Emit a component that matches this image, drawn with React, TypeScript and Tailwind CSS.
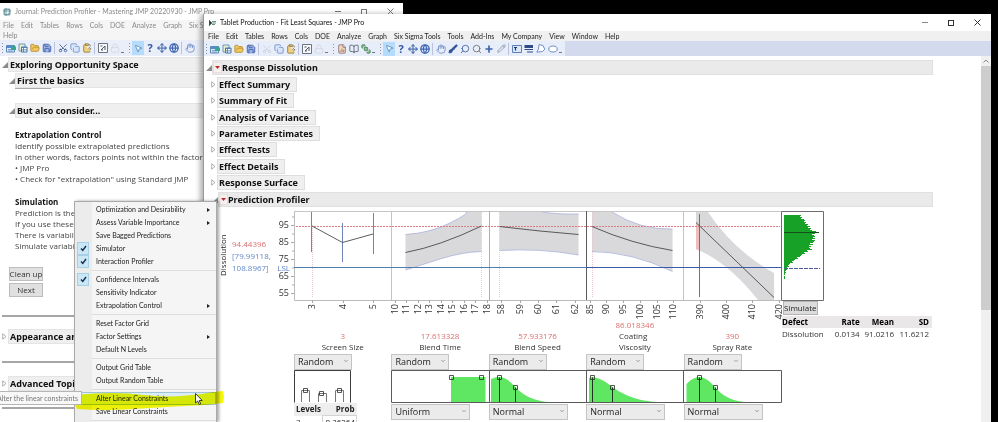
import React from 'react';
import {
  BookOpen, BringToFront, Brush, ClipboardPaste, Copy, FileChartColumn, FolderOpen, Globe, Hand, Lock,
  MousePointer2, Move, Pencil, Plus, Save, Scissors, Search, Table2, ChevronDown,
} from 'lucide-react';

const MENUS = ['File', 'Edit', 'Tables', 'Rows', 'Cols', 'DOE', 'Analyze', 'Graph', 'Six Sigma Tools', 'Tools', 'Add-Ins', 'My Company', 'View', 'Window', 'Help'];

const SECTIONS = ['Effect Summary', 'Summary of Fit', 'Analysis of Variance', 'Parameter Estimates', 'Effect Tests', 'Effect Details', 'Response Surface'];

const FACTORS = [
  { name: ['Screen Size'], value: '3', dist: null },
  { name: ['Blend Time'], value: '17.613328', dist: 'Uniform' },
  { name: ['Blend Speed'], value: '57.933176', dist: 'Normal' },
  { name: ['Coating', 'Viscosity'], value: '86.018346', dist: 'Normal' },
  { name: ['Spray Rate'], value: '390', dist: 'Normal' },
];

type Entry = { label: string; checked?: boolean; sub?: boolean; active?: boolean };

const CONTEXT_MENU: Entry[][] = [
  [
    { label: 'Optimization and Desirability', sub: true },
    { label: 'Assess Variable Importance', sub: true },
    { label: 'Save Bagged Predictions' },
    { label: 'Simulator', checked: true },
    { label: 'Interaction Profiler', checked: true },
  ],
  [
    { label: 'Confidence Intervals', checked: true },
    { label: 'Sensitivity Indicator' },
    { label: 'Extrapolation Control', sub: true },
  ],
  [{ label: 'Reset Factor Grid' }, { label: 'Factor Settings', sub: true }, { label: 'Default N Levels' }],
  [{ label: 'Output Grid Table' }, { label: 'Output Random Table' }],
  [{ label: 'Alter Linear Constraints', active: true }, { label: 'Save Linear Constraints' }],
];

const X_TICKS: [number, string][] = [
  [312, '3'], [343, '4'], [373, '5'],
  [395, '10'], [406, '11'], [418, '12'], [429, '13'], [441, '14'], [452, '15'], [464, '16'], [475, '17'], [487, '18'],
  [501, '58'], [520, '59'], [538, '60'], [556, '61'], [575, '62'],
  [590, '85'], [606, '90'], [623, '95'], [640, '100'], [657, '105'], [673, '110'],
  [700, '390'], [726, '400'], [752, '410'], [779, '420'],
];

const Y_TICKS: [number, string][] = [[225, '95'], [242, '85'], [259, '75'], [276, '65'], [293, '55']];

// bar length of each 1px slice, top to bottom
const HISTOGRAM = [
  17, 16, 18, 17, 20, 21, 20, 22, 21, 24, 23, 26, 24, 27, 26, 28, 32, 29, 31, 28, 30, 31, 29, 31, 28, 31, 30, 29, 26, 29,
  25, 27, 25, 26, 28, 23, 24, 20, 21, 18, 17, 16, 13, 14, 11, 10, 8, 9, 6, 5, 4, 5, 3, 2, 3, 2, 1, 2, 1, 1, 0, 1, 1, 1,
];

const Grip = () => (
  <span className="mx-px flex w-[3px] flex-col items-center gap-[2px]">
    {[0, 1, 2, 3].map((i) => <span key={i} className="h-px w-px bg-[#8795b5]" />)}
  </span>
);

const Split = () => <span className="mx-px h-3 w-[2px] border-l border-[#b9c3dc]" />;

const Tail = () => <span className="mr-[3px] mb-[3px] h-[3px] w-[3px] self-end border-b border-[#6d7892]" />;

const Tool: React.FC<{ label: string; active?: boolean; children: React.ReactNode }> = ({ label, active, children }) => (
  <button
    type="button"
    aria-label={label}
    className={active ? 'flex h-[14px] w-3 items-center justify-center bg-[#b5dcfa]' : 'flex h-[14px] w-3 items-center justify-center'}
  >
    {children}
  </button>
);

const FileTools = () => (
  <>
    <Grip />
    <Tool label="Home window">
      <svg className="h-[10px] w-[10px]" viewBox="0 0 10 10">
        <path d="M.5 2.500h8v6.500h-8z" fill="#dfeaf7" stroke="#5d87b8" />
        <path d="M1 3h7v2H1z" fill="#4f8fcf" />
        <path d="M5 5l3-3 2 2v3H5z" fill="#3aa58a" />
        <path d="M2 6.500h3M2 8h5" stroke="#5d87b8" strokeWidth=".7" />
      </svg>
    </Tool>
    <Tool label="New data table">
      <svg className="h-[10px] w-[10px]" viewBox="0 0 10 10">
        <path d="M1 1h6v7H1z" fill="#e8f1cf" stroke="#6f98b8" />
        <path d="M3.500 4h5.500v5H3.500z" fill="#fff" stroke="#4577a8" />
        <path d="M3.500 4.500h5.500M5.500 4v5M3.500 6.800h5.500" stroke="#4577a8" strokeWidth=".8" />
      </svg>
    </Tool>
    <Tool label="Open">
      <FolderOpen className="h-[10px] w-[10px] fill-[#efc95c] text-[#b88a2b]" />
    </Tool>
    <Tool label="Save">
      <Save className="h-[10px] w-[10px] fill-[#9db4e6] text-[#3b57a4]" />
    </Tool>
    <Split />
  </>
);

const EditTools: React.FC<{ cut: boolean }> = ({ cut }) => (
  <>
    <Tool label="Cut"><Scissors className={cut ? 'h-[10px] w-[10px] -rotate-90 text-[#3f5d96]' : 'h-[10px] w-[10px] -rotate-90 text-[#c9d0de]'} /></Tool>
    <Tool label="Copy"><Copy className="h-[10px] w-[10px] fill-[#d9e6fa] text-[#6b8cc4]" /></Tool>
    <Tool label="Paste"><ClipboardPaste className="h-[10px] w-[10px] fill-[#f0d27a] text-[#8d7646]" /></Tool>
    <Split />
    <Tool label="Journal">
      <svg className="h-[10px] w-[10px]" viewBox="0 0 10 10">
        <path d="M.5.5h9v9h-9z" fill="#f7f9fc" stroke="#6c727e" />
        <path d="M2.500 3h2M3 7l4-4M7 3v4M3 7h2" fill="none" stroke="#4c5464" />
      </svg>
    </Tool>
    <Tool label="Lock"><Lock className="h-[10px] w-[10px] text-[#d2d6de]" /></Tool>
    <Tail />
  </>
);

const PointerTools = () => (
  <>
    <Grip />
    <Tool label="Arrow" active><MousePointer2 className="h-[9px] w-[9px] fill-white text-[#4a7eb0]" /></Tool>
    <Tool label="Help"><span className="text-[11px] leading-3 font-bold text-[#2d55a5]">?</span></Tool>
    <Tool label="Crosshair"><Move className="h-[10px] w-[10px] text-[#5778b5]" strokeWidth={3} /></Tool>
    <Tool label="Globe"><Globe className="h-[10px] w-[10px] text-[#3f68b3]" strokeWidth={3} /></Tool>
    <Split />
    <Tool label="Grabber"><Hand className="h-[10px] w-[10px] text-[#6e8ec8]" /></Tool>
  </>
);

const Expanded = () => (
  <svg className="h-[6px] w-[6px] shrink-0" viewBox="0 0 6 6"><path d="M6 0v6H0z" fill="#8b8b8b" /></svg>
);

const Collapsed = () => (
  <svg className="h-[7px] w-[5px] shrink-0" viewBox="0 0 5 7"><path d="M.7.800 4 3.500.7 6.200z" fill="#fff" stroke="#9a9a9a" strokeWidth=".8" /></svg>
);

const RedTriangle = () => (
  <button type="button" aria-label="Options" className="flex h-[11px] w-[9px] items-center justify-center border border-[#ecdcdc] bg-[#f8efef]">
    <svg className="h-[3px] w-[5px]" viewBox="0 0 5 3"><path d="M0 0h5L2.500 3z" fill="#c22a2a" /></svg>
  </button>
);

const Dropdown: React.FC<{ label: string; value: string; options: string[]; wide?: boolean }> = ({ label, value, options, wide }) => (
  <div className={wide ? 'relative h-4 w-[79px]' : 'relative h-4 w-[58px]'}>
    <select
      aria-label={label}
      defaultValue={value}
      className="block h-full w-full appearance-none border border-[#c4c4c4] bg-[#ebebeb] pl-[3px] text-[9px] leading-3 text-[#222]"
    >
      {options.map((o) => <option key={o}>{o}</option>)}
    </select>
    <ChevronDown className="pointer-events-none absolute top-1 right-[3px] h-[6px] w-[6px] text-[#555]" />
  </div>
);

const ProfilerPlot = () => (
  <svg className="block h-[112px] w-[511px] overflow-visible" viewBox="270 207 511 112" role="img" aria-label="Prediction profiler">
    <g fill="#d9d8da">
      <path d="M405.500 234.500Q430 233 450 223T466 212H481.500V251.500Q462 252 440 259T405.500 270z" />
      <path d="M499.500 212H542Q558 214.500 578.500 214V255Q540 248 499.500 250.500z" />
      <path d="M592 212H612Q640 230 672.500 229V271.500Q632 252 592 251.500z" />
      <path d="M696 212H708Q733 250 774 273V300H758Q728 262 696 249z" />
    </g>
    <path d="M696 222 700 226V251L696 249z" fill="#efbcbc" />
    <g fill="none" stroke="#a9b1dc" strokeWidth=".8">
      <path d="M405.500 234.500Q430 233 450 223T466 212M481.500 251.500Q462 252 440 259T405.500 270" />
      <path d="M542 212Q558 214.500 578.500 214M578.500 255Q540 248 499.500 250.500" />
      <path d="M612 212Q640 230 672.500 229M672.500 271.500Q632 252 592 251.500" />
    </g>
    <g fill="none">
      <path d="M294.500 211.500V300.500H781" stroke="#bcbcbc" />
      <path d="M294 211.500H781" stroke="#c6c6c6" />
      <path d="M391.500 211V300M683.500 211V300" stroke="#c4c4c8" />
      <path d="M489.500 211V300" stroke="#aeaeb2" />
      <path d="M586.500 211V300" stroke="#5c5c60" />
    </g>
    <path d="M296 226.500H780" stroke="#dc7d88" strokeDasharray="2 1" />
    <path d="M312.500 226V297M481.500 212V297M499.500 212V297M592.500 212V297" stroke="#e8c8ca" strokeDasharray="1 1" />
    <path d="M699.500 214V297" stroke="#b35560" />
    <path d="M294 267.500H586" stroke="#4f7cb0" />
    <path d="M586 267.500H781" stroke="#3d5aa8" />
    <path d="M311.500 212V252M342.500 223V262M373.500 213V254" stroke="#6f83b5" />
    <g fill="none" stroke="#4b4b4b" strokeWidth=".9">
      <path d="M312 226 342.500 242.500 373 234" />
      <path d="M405.500 252.500Q440 246 481.500 226" />
      <path d="M499.500 226.500 540 231 578.500 234.500" />
      <path d="M592 226.500Q632 244 672.500 250.500" />
      <path d="M696 222.500 774 297.500" />
    </g>
    {Y_TICKS.map(([y, t]) => (
      <g key={t}>
        <path d={`M291 ${y + 0.5}h3M292 ${y - 8}h2`} stroke="#a8a8a8" />
        <text x="289" y={y + 3} textAnchor="end" fontSize="9" fill="#333">{t}</text>
      </g>
    ))}
    <text x="290" y="271" textAnchor="end" fontSize="8" fill="#5b7fc0">LSL</text>
    {X_TICKS.map(([x, t]) => (
      <g key={x}>
        <path d={`M${x}.5 300v3`} stroke="#a8a8a8" />
        <text transform={`translate(${x + 3} 304) rotate(-90)`} textAnchor="end" fontSize="9" fill="#333">{t}</text>
      </g>
    ))}
  </svg>
);

const Handle: React.FC<{ x: number; y: number; stem?: boolean }> = ({ x, y, stem }) => (
  <g fill="none" stroke="#233023">
    {stem && <path d={`M${x} ${y}V402`} />}
    <path d={`M${x - 2} ${y - 2}h4v4h-4z`} strokeWidth=".8" />
  </g>
);

const Distributions = () => (
  <svg className="block h-[33px] w-[488px]" viewBox="294 370 488 33" role="img" aria-label="Factor distributions">
    <g fill="#5fe663">
      <path d="M451 377H485.500V402H451z" />
      <path d="M491 402V379Q495 377 499.500 377C515 378 514 398 548 402z" />
      <path d="M589 402V378L592.500 377C612 380 614 398 655 402z" />
      <path d="M686.500 402V384Q693 377 699.500 377C716 379 714 399 745 402z" />
    </g>
    <path d="M294.500 402.500V370.500H350.500V402.500" fill="none" stroke="#3c3c3c" />
    <path d="M391.500 402.500V370.500H781.500V402.500zM489.500 370V402M586.500 370V402M683.500 370V402" fill="none" stroke="#5a5a5a" />
    <path d="M301.500 402V390.500H309.500V402M318.500 402V393.500H326.500V402M335.500 402V390.500H343.500V402" fill="none" stroke="#777" />
    <Handle x={305.5} y={390.5} />
    <Handle x={321.5} y={393.5} />
    <Handle x={339.5} y={390.5} />
    <Handle x={451.5} y={377.5} />
    <Handle x={481.5} y={377.5} />
    <Handle x={499.5} y={377.5} stem />
    <Handle x={515.5} y={387.5} stem />
    <Handle x={592.5} y={377.5} stem />
    <Handle x={612.5} y={387.5} stem />
    <Handle x={699.5} y={377.5} stem />
    <Handle x={715.5} y={387.5} stem />
  </svg>
);

const SimulatorOutput = () => (
  <div className="w-[152px]">
    <svg className="block h-[94px] w-[43px]" viewBox="781 207 43 94" role="img" aria-label="Simulated dissolution">
      <path d="M781.500 211.500H823.500V300.500H781.500z" fill="#fff" stroke="#6d6d6d" />
      {HISTOGRAM.map((w, i) => <rect key={i} x="784" y={215 + i} width={w} height="1" fill="#17a126" />)}
      <path d="M784 232.500H819" stroke="#174f1c" />
      <path d="M784 268.500H820" stroke="#4a5a96" strokeDasharray="4 1" />
    </svg>
    <button type="button" className="ml-[2px] block h-[14px] border border-[#b4b4b4] bg-[#dcdcdc] text-[8px] leading-3 text-[#222]">Simulate</button>
    <table className="mt-px ml-px w-[150px] text-[8px] leading-3 text-[#333]">
      <thead>
        <tr className="bg-[#e9e7e7] text-black">
          <th className="text-left">Defect</th>
          <th className="text-right">Rate</th>
          <th className="text-right">Mean</th>
          <th className="pr-[3px] text-right">SD</th>
        </tr>
      </thead>
      <tbody>
        <tr>
          <td>Dissolution</td>
          <td className="text-right">0.0134</td>
          <td className="text-right">91.0216</td>
          <td className="pr-[3px] text-right">11.6212</td>
        </tr>
      </tbody>
    </table>
  </div>
);

const Profiler = () => (
  <div className="flex pl-[11px]">
    <div className="flex w-[53px] shrink-0">
      <span className="mt-[25px] h-[46px] w-3 rotate-180 text-center text-[8px] leading-3 text-[#222] [writing-mode:vertical-rl]">Dissolution</span>
      <p className="mt-[31px] ml-[3px] text-[8px] leading-3 whitespace-nowrap text-[#6389c9]">
        <span className="text-[#dc6f6f]">94.44396</span><br />[79.99118,<br />108.8967]
      </p>
    </div>
    <div className="shrink-0">
      <ProfilerPlot />
      <div className="ml-6 w-[487px]">
        <div className="grid h-[34px] grid-cols-5 pb-px">
          {FACTORS.map((f) => (
            <div key={f.value} className="flex flex-col items-center justify-end text-[8px] leading-[11px] text-[#333]">
              <span className="text-[#dc6f6f]">{f.value}</span>
              <span>{f.name.map((n) => <span key={n} className="block">{n}</span>)}</span>
            </div>
          ))}
        </div>
        <div className="mt-px grid grid-cols-5">
          {FACTORS.map((f) => <Dropdown key={f.value} label={`${f.name.join(' ')} role`} value="Random" options={['Fixed', 'Random']} />)}
        </div>
        <Distributions />
        <div className="grid grid-cols-5">
          {FACTORS.map((f) =>
            f.dist ? (
              <div key={f.value} className="pt-px">
                <Dropdown wide label={`${f.name.join(' ')} distribution`} value={f.dist} options={['Normal', 'Uniform']} />
              </div>
            ) : (
              <table key={f.value} className="w-[63px] text-[8px] leading-3 text-[#222]">
                <thead>
                  <tr className="bg-[#eee]">
                    <th className="pl-[2px] text-left">Levels</th>
                    <th className="pr-[2px] text-right">Prob</th>
                  </tr>
                </thead>
                <tbody>
                  <tr>
                    <td className="pl-[2px]">3</td>
                    <td className="border border-[#d4d4d4] pr-px text-right leading-[10px]">0.36264</td>
                  </tr>
                </tbody>
              </table>
            ),
          )}
        </div>
      </div>
    </div>
    <SimulatorOutput />
  </div>
);

const JournalWindow = () => (
  <section className="absolute top-[3px] bottom-0 left-0 w-[403px] overflow-hidden bg-white">
    <header className="flex h-[17px] items-center gap-1 pl-[3px] font-[Lato] text-[7px] text-[#8a8a8a]">
      <Table2 className="h-2 w-2 fill-[#9cc5b4] text-[#3b6e86]" />
      <span className="flex-1">Journal: Prediction Profiler - Mastering JMP 20220930 - JMP Pro</span>
      <span className="mr-[9px] flex items-center gap-5 text-[#777]">
        <span className="h-px w-[6px] bg-current" />
        <span className="h-[6px] w-[6px] border border-current" />
        <svg className="h-[7px] w-[7px]" viewBox="0 0 7 7"><path d="M.5.5l6 6M6.500.5l-6 6" stroke="currentColor" /></svg>
      </span>
    </header>
    <nav className="h-5 bg-[#f5f5f5] pl-[3px] font-[Lato] text-[7px] leading-[10px] text-[#8a8a8a]">
      <div className="flex gap-[7px] whitespace-nowrap">
        {MENUS.slice(0, 9).map((m) => <span key={m}>{m}</span>)}
      </div>
      <span>Help</span>
    </nav>
    <div className="flex h-4 items-center bg-[#e9eef9]">
      <FileTools />
      <EditTools cut />
      <PointerTools />
    </div>
    <div className="font-['Noto_Sans'] text-[9px] leading-[15px] font-bold text-[#111]">
      <h2 className="mt-px flex items-center pl-[2px]"><Expanded /><span className="flex-1 border border-[#e4e4e4] bg-[#efefef] pl-px leading-[13px]">Exploring Opportunity Space</span></h2>
      <h3 className="mt-px flex items-center pl-[9px]"><Expanded /><span className="flex-1 border border-[#e4e4e4] bg-[#efefef] pl-px leading-[13px]">First the basics</span></h3>
      <div className="ml-[15px] h-px w-9 bg-[#aaa]" />
      <h3 className="mt-[14px] flex items-center pl-[9px]"><Expanded /><span className="flex-1 border border-[#e4e4e4] bg-[#efefef] pl-px leading-[13px]">But also consider...</span></h3>
    </div>
    <div className="mt-[11px] pl-[15px] text-[8px] leading-[11px] whitespace-nowrap text-[#444]">
      <h4 className="font-bold text-[#111]">Extrapolation Control</h4>
      <p>Identify possible extrapolated predictions</p>
      <p>In other words, factors points not within the factor space</p>
      <p>• JMP Pro</p>
      <p>• Check for "extrapolation" using Standard JMP</p>
      <h4 className="mt-3 font-bold text-[#111]">Simulation</h4>
      <p>Prediction is the mean</p>
      <p>If you use these settings</p>
      <p>There is variability in the</p>
      <p>Simulate variability in</p>
    </div>
    <div className="mt-4 ml-[9px] flex w-[34px] flex-col gap-[2px] text-[8px] leading-3 whitespace-nowrap text-[#333]">
      <button type="button" className="flex h-[14px] items-center justify-center border border-[#bdbdbd] bg-[#e0e0e0]">Clean up</button>
      <button type="button" className="flex h-[14px] items-center justify-center border border-[#bdbdbd] bg-[#e0e0e0]">Next</button>
    </div>
    <div className="mt-[18px] ml-[2px] h-[2px] bg-[#a6a6a6]" />
    <h2 className="mt-3 flex items-center gap-px pl-[2px] font-['Noto_Sans'] text-[9px] font-bold text-[#111]"><Collapsed /><span className="border border-[#e4e4e4] bg-[#efefef] px-px leading-[13px]">Appearance and Layout</span></h2>
    <div className="mt-[17px] ml-[2px] h-[2px] bg-[#a6a6a6]" />
    <h2 className="mt-[13px] flex items-center gap-px pl-[2px] font-['Noto_Sans'] text-[9px] font-bold text-[#111]"><Collapsed /><span className="border border-[#e4e4e4] bg-[#efefef] px-px leading-[13px]">Advanced Topics</span></h2>
    <div className="mt-4 ml-[2px] h-[2px] bg-[#a6a6a6]" />
  </section>
);

const ReportWindow = () => (
  <section className="absolute top-[14px] right-[7px] bottom-0 left-[203px] flex flex-col overflow-hidden border-l border-[#9a9a9a] bg-white shadow-[-3px_0_5px_rgba(0,0,0,0.3)]">
    <header className="flex h-[17px] shrink-0 items-center pl-[5px] font-[Lato] text-[7px] text-[#111]">
      <svg className="mr-1 h-[6px] w-[7px]" viewBox="0 0 7 6"><path d="M0 0l3 3-3 3zM3 3h4M3 1.500h4M3 4.500h3" fill="#334" stroke="#4a7a55" strokeWidth=".8" /></svg>
      <span className="flex-1">Tablet Production - Fit Least Squares - JMP Pro</span>
      <span className="mr-[10px] flex items-center gap-5 text-[#333]">
        <span className="h-px w-[6px] bg-[#888]" />
        <span className="h-[6px] w-[6px] border border-current" />
        <svg className="h-[7px] w-[7px]" viewBox="0 0 7 7"><path d="M.5.5l6 6M6.500.5l-6 6" stroke="currentColor" /></svg>
      </span>
    </header>
    <nav className="flex h-[10px] shrink-0 gap-[7px] bg-[#f0f0f0] pl-1 font-[Lato] text-[7px] leading-[10px] whitespace-nowrap text-[#222]">
      {MENUS.map((m) => <span key={m}>{m}</span>)}
    </nav>
    <div className="flex h-[15px] shrink-0 bg-[#d3daee]">
      <div className="flex items-center bg-[#e7edf9]">
        <FileTools />
        <EditTools cut={false} />
        <Grip />
        <Tool label="Run model"><FileChartColumn className="h-[10px] w-[10px] fill-[#f3d9b4] text-[#8a6a80]" /></Tool>
        <Tool label="Journal view"><BookOpen className="h-[10px] w-[10px] text-[#555f70]" /></Tool>
        <Tool label="Arrange"><BringToFront className="h-[10px] w-[10px] fill-[#8bc08f] text-[#3d7a55]" /></Tool>
        <Tail />
        <PointerTools />
        <Tool label="Brush"><Brush className="h-[10px] w-[10px] fill-[#2d55a5] text-[#2f4f8d]" /></Tool>
        <Tool label="Lasso select"><Search className="h-[10px] w-[10px] -scale-x-100 text-[#3f5f9c]" /></Tool>
        <Tool label="Magnifier"><Search className="h-[10px] w-[10px] text-[#6b6b6b]" /></Tool>
        <Tool label="Crosshairs"><Plus className="h-[10px] w-[10px] text-[#3d63ae]" strokeWidth={4} /></Tool>
        <Tool label="Draw"><Pencil className="h-[9px] w-[9px] text-[#7d8aa3]" /></Tool>
        <Split />
        <Tool label="Annotate">
          <svg className="h-[8px] w-[10px]" viewBox="0 0 10 8"><path d="M.5.5h9v7h-9z" fill="#dce7f8" stroke="#5f7fb8" /><path d="M2 2.500h3M3.500 2v3.500" stroke="#1f3566" strokeWidth="1.200" /></svg>
        </Tool>
        <Tool label="Line">
          <svg className="h-[8px] w-[10px]" viewBox="0 0 10 8"><path d="M.5 0h8.500v3H.5z" fill="#2f4a86" /><path d="M.5 4.500H9M3 7h6" stroke="#2f4a86" strokeWidth="1.200" /></svg>
        </Tool>
        <Tool label="Polygon">
          <svg className="h-[9px] w-[10px]" viewBox="0 0 10 9"><path d="M3 .6 7 1.500l1.800 3.800L6.500 7.500.8 8.200 2.500 5z" fill="#fff" stroke="#6e8ec8" strokeLinejoin="round" /></svg>
        </Tool>
        <Tool label="Oval">
          <svg className="h-[8px] w-[10px]" viewBox="0 0 10 8"><ellipse cx="5" cy="4" rx="4.200" ry="3" fill="#fff" stroke="#6e8ec8" /></svg>
        </Tool>
        <Tail />
      </div>
    </div>
    <div className="flex min-h-0 flex-1">
      <div className="min-w-0 flex-1 overflow-hidden pt-1 pl-[2px]">
        <div className="w-[727px] font-['Noto_Sans'] text-[9px] text-[#111]">
          <h1 className="flex h-[15px] items-center font-bold">
            <Expanded />
            <span className="flex h-full flex-1 items-center border border-[#e0e0e0] bg-[#eaeaea]"><RedTriangle />Response Dissolution</span>
          </h1>
          <div className="mt-px flex h-[115px] flex-col pl-[5px]">
            {SECTIONS.map((s) => (
              <h2 key={s} className="flex flex-1 items-center gap-px font-bold">
                <Collapsed />
                <span className="border border-[#dedede] bg-[#efefef] pr-[6px] pl-px leading-[13px]">{s}</span>
              </h2>
            ))}
          </div>
          <h2 className="mt-px flex h-[15px] items-center pl-[6px] font-bold">
            <Expanded />
            <span className="flex h-full flex-1 items-center border border-[#e0e0e0] bg-[#eaeaea]"><RedTriangle />Prediction Profiler</span>
          </h2>
        </div>
        <Profiler />
      </div>
      <div className="flex w-[10px] flex-col bg-[#f0f0f0]">
        <svg className="mx-auto my-[3px] h-[4px] w-[6px]" viewBox="0 0 6 4"><path d="M.5 3.500 3 1l2.500 2.500" fill="none" stroke="#888" /></svg>
        <div className="h-[244px] bg-[#cdcdcd]" />
      </div>
    </div>
  </section>
);

const ContextMenu = () => (
  <div role="menu" className="absolute top-[201px] bottom-0 left-[74px] w-[143px] overflow-hidden border border-b-0 border-[#a9a9a9] bg-[linear-gradient(to_right,#ececec_17px,#f5f5f5_17px)] pt-px font-[Lato] text-[7px] leading-[13px] whitespace-nowrap text-[#222] shadow-[2px_0_3px_rgba(0,0,0,0.35)]">
    {CONTEXT_MENU.map((group, i) => (
      <div key={i}>
        {i > 0 && <div className="ml-[17px] flex h-[5px] items-center"><span className="h-px w-full bg-[#dedede]" /></div>}
        {group.map((e) => (
          <button
            key={e.label}
            type="button"
            role="menuitem"
            className={e.active ? 'flex h-[13px] w-full items-center bg-[#dcecf6] outline outline-[#9fc4d8] -outline-offset-1' : 'flex h-[13px] w-full items-center'}
          >
            <span className={e.checked ? 'ml-[2px] flex h-[13px] w-3 items-center justify-center border border-[#a6d0e8] bg-[#cbe6f5]' : 'ml-[2px] w-3'}>
              {e.checked && <svg className="h-[7px] w-[7px]" viewBox="0 0 7 7"><path d="M1 3.500 2.800 5.500 6 1" fill="none" stroke="#15304f" strokeWidth="1.400" /></svg>}
            </span>
            <span className="ml-[7px] flex-1 text-left">{e.label}</span>
            {e.sub && <svg className="mr-[6px] h-[4px] w-[3px]" viewBox="0 0 3 4"><path d="M0 0l3 2-3 2z" fill="#222" /></svg>}
          </button>
        ))}
      </div>
    ))}
    <div className="mt-[2px] ml-[17px] h-px bg-[#dedede]" />
  </div>
);

export default function App() {
  return (
    <main className="relative min-h-screen overflow-hidden bg-black font-['Open_Sans','Noto_Sans',sans-serif]">
      <JournalWindow />
      <ReportWindow />
      <ContextMenu />
      <svg className="pointer-events-none absolute top-[389px] left-[74px] h-6 w-[152px] mix-blend-multiply" viewBox="0 0 152 24">
        <path d="M1 6Q40 2 70 6T140 3L149 2Q151 8 149 14L130 16Q90 18 60 20T3 20Q-1 12 1 6z" fill="#f6fa08" />
      </svg>
      <div role="tooltip" className="absolute top-[391px] left-0 flex h-[14px] w-[82px] items-center justify-end overflow-hidden border border-l-0 border-[#b5b5b5] bg-[#f7f7f7] pr-[3px] font-[Lato] text-[7px] whitespace-nowrap text-[#777]">
        Alter the linear constraints
      </div>
      <svg className="pointer-events-none absolute top-[393px] left-[195px] h-3 w-2" viewBox="0 0 8 12">
        <path d="M.5.5v9.500l2.200-2 1.600 3.500 1.400-.6-1.500-3.400h3z" fill="#fff" stroke="#111" strokeWidth=".8" />
      </svg>
    </main>
  );
}
